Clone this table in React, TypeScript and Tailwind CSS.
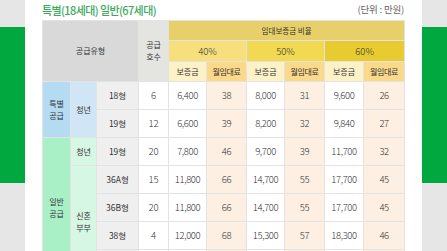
import type { ReactNode } from "react"

type Row = {
	size: string
	count: string
	values: string[]
}

const special: Row[] = [
	{ size: "18형", count: "6", values: ["6,400", "38", "8,000", "31", "9,600", "26"] },
	{ size: "19형", count: "12", values: ["6,600", "39", "8,200", "32", "9,840", "27"] },
]

const general: Row[] = [
	{ size: "19형", count: "20", values: ["7,800", "46", "9,700", "39", "11,700", "32"] },
	{ size: "36A형", count: "15", values: ["11,800", "66", "14,700", "55", "17,700", "45"] },
	{ size: "36B형", count: "20", values: ["11,800", "66", "14,700", "55", "17,700", "45"] },
	{ size: "38형", count: "4", values: ["12,000", "68", "15,300", "57", "18,300", "46"] },
	// next row sits below the fold, only its cells show
	{ size: "", count: "", values: ["", "", "", "", "", ""] },
]

const valueBg = ["bg-white", "bg-[#fdefe2]", "bg-white", "bg-[#fdefe2]", "bg-white", "bg-[#fdefe2]"]

const Cell = ({ className = "", children, ...rest }: { className?: string; children?: ReactNode; rowSpan?: number; colSpan?: number }) => (
	<td className={`border border-[#e3e3e3] text-center align-middle p-0 ${className}`} {...rest}>
		{children}
	</td>
)

const BodyRow = ({ row, lead, top }: { row: Row; lead?: ReactNode; top?: boolean }) => (
	<tr className={`h-[28px] ${top ? "border-t border-t-[#8a8a8a]" : ""}`}>
		{lead}
		<Cell className="bg-[#efefef] text-[8.5px]">{row.size}</Cell>
		<Cell className="bg-white text-[9.5px] font-light">{row.count}</Cell>
		{row.values.map((v, i) => (
			<Cell key={i} className={`${valueBg[i]} text-[9.5px] font-light tracking-[-0.4px]`}>
				{v}
			</Cell>
		))}
	</tr>
)

export default function App() {
	return (
		<div
			className="w-[447px] h-[251px] overflow-hidden bg-white flex text-[#333]"
			style={{ fontFamily: '"Noto Sans CJK KR", "Noto Sans", sans-serif' }}>
			<div className="w-[25px] flex flex-col shrink-0">
				<div className="h-[27px] bg-[#e6e6e6]" />
				<div className="h-[156px] bg-[#00a83f]" />
				<div className="flex-1 bg-[#e6e6e6]" />
			</div>

			<div className="w-[397px] shrink-0 pl-[17px]">
				<div className="w-[362px] h-[20px] flex items-center justify-between">
					<span className="text-[11px] font-medium text-[#3aaa5c] tracking-[-0.6px] leading-none">
						특별(18세대) 일반(67세대)
					</span>
					<span className="text-[9.5px] text-[#666] leading-none tracking-[-0.2px]">(단위 : 만원)</span>
				</div>

				<table className="w-[362px] table-fixed border-collapse border border-[#666]">
					<colgroup>
						<col className="w-[28px]" />
						<col className="w-[26px]" />
						<col className="w-[42px]" />
						<col className="w-[30px]" />
						<col className="w-[38px]" />
						<col className="w-[40px]" />
						<col className="w-[38px]" />
						<col className="w-[40px]" />
						<col className="w-[39px]" />
						<col className="w-[41px]" />
					</colgroup>
					<tbody>
						<tr className="h-[20px]">
							<Cell colSpan={3} rowSpan={3} className="bg-[#d9d9d9] text-[8px]">
								공급유형
							</Cell>
							<Cell rowSpan={3} className="bg-[#e4e4e1] text-[8px] leading-[12px]">
								공급
								<br />
								호수
							</Cell>
							<Cell colSpan={6} className="bg-[#e7d06a] text-[7.5px]">
								임대보증금 비율
							</Cell>
						</tr>
						<tr className="h-[21px]">
							<Cell colSpan={2} className="bg-[#f6df7c] text-[9.5px] font-light">
								40%
							</Cell>
							<Cell colSpan={2} className="bg-[#f1d952] text-[9.5px] font-light">
								50%
							</Cell>
							<Cell colSpan={2} className="bg-[#e8cb2f] text-[9.5px] font-light">
								60%
							</Cell>
						</tr>
						<tr className="h-[20px]">
							{[0, 1, 2].map((i) => [
								<Cell key={`a${i}`} className="bg-[#fdf1c7] text-[8px]">
									보증금
								</Cell>,
								<Cell key={`b${i}`} className="bg-[#fbd98b] text-[8px] tracking-[-0.3px]">
									월임대료
								</Cell>,
							])}
						</tr>

						<BodyRow
							row={special[0]}
							lead={
								<>
									<Cell rowSpan={2} className="bg-[#b5dbf3] text-[8px] leading-[12px]">
										특별
										<br />
										공급
									</Cell>
									<Cell rowSpan={2} className="bg-[#d0e6f6] text-[8px]">
										청년
									</Cell>
								</>
							}
						/>
						<BodyRow row={special[1]} />

						<BodyRow
							top
							row={general[0]}
							lead={
								<>
									<Cell rowSpan={5} className="bg-[#a9f0c6] text-[8px] leading-[12px]">
										일반
										<br />
										공급
									</Cell>
									<Cell className="bg-[#d6f7e3] text-[8px]">청년</Cell>
								</>
							}
						/>
						<BodyRow
							row={general[1]}
							lead={
								<Cell rowSpan={4} className="bg-[#d6f7e3] text-[8px] leading-[12px]">
									신혼
									<br />
									부부
								</Cell>
							}
						/>
						<BodyRow row={general[2]} />
						<BodyRow row={general[3]} />
						<BodyRow row={general[4]} />
					</tbody>
				</table>
			</div>

			<div className="w-[25px] flex flex-col shrink-0">
				<div className="h-[27px] bg-[#e6e6e6]" />
				<div className="h-[156px] bg-[#00a83f]" />
				<div className="flex-1 bg-[#e6e6e6]" />
			</div>
		</div>
	)
}
